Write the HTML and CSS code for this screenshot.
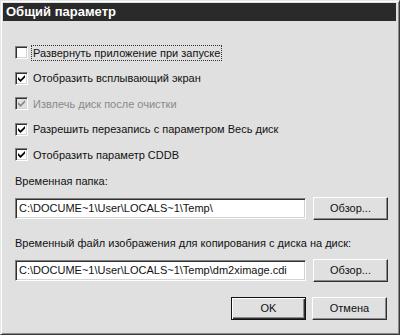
FILE: index.html
```html
<!DOCTYPE html>
<html lang="ru">
<head>
    <meta charset="UTF-8">
    <title>Общий параметр</title>
    <link rel="stylesheet" href="styles.css">
</head>
<body>

<div class="window">
    <div class="titlebar">Общий параметр</div>

    <div class="content">
        <div class="checks">
            <label class="check-row">
                <span class="box"></span>
                <span class="text focused">Развернуть приложение при запуске</span>
            </label>
            <label class="check-row">
                <span class="box">
                    <svg viewBox="0 0 7 7" width="7" height="7"><path d="M0 2 L0 4.5 L2.5 7 L7 2.5 L7 0 L2.5 4.5 Z" fill="#000"/></svg>
                </span>
                <span class="text">Отобразить всплывающий экран</span>
            </label>
            <label class="check-row disabled">
                <span class="box">
                    <svg viewBox="0 0 7 7" width="7" height="7"><path d="M0 2 L0 4.5 L2.5 7 L7 2.5 L7 0 L2.5 4.5 Z" fill="#8a8a8a"/></svg>
                </span>
                <span class="text">Извлечь диск после очистки</span>
            </label>
            <label class="check-row">
                <span class="box">
                    <svg viewBox="0 0 7 7" width="7" height="7"><path d="M0 2 L0 4.5 L2.5 7 L7 2.5 L7 0 L2.5 4.5 Z" fill="#000"/></svg>
                </span>
                <span class="text">Разрешить перезапись с параметром Весь диск</span>
            </label>
            <label class="check-row">
                <span class="box">
                    <svg viewBox="0 0 7 7" width="7" height="7"><path d="M0 2 L0 4.5 L2.5 7 L7 2.5 L7 0 L2.5 4.5 Z" fill="#000"/></svg>
                </span>
                <span class="text">Отобразить параметр CDDB</span>
            </label>
        </div>

        <div class="field first">
            <div class="field-label">Временная папка:</div>
            <div class="field-row">
                <div class="textbox">C:\DOCUME~1\User\LOCALS~1\Temp\</div>
                <button class="btn">Обзор...</button>
            </div>
        </div>

        <div class="field second">
            <div class="field-label">Временный файл изображения для копирования с диска на диск:</div>
            <div class="field-row">
                <div class="textbox">C:\DOCUME~1\User\LOCALS~1\Temp\dm2ximage.cdi</div>
                <button class="btn">Обзор...</button>
            </div>
        </div>

        <div class="actions">
            <button class="btn default">OK</button>
            <button class="btn">Отмена</button>
        </div>
    </div>
</div>

</body>
</html>
```

FILE: styles.css
```css
body {
    margin: 0;
    padding: 0;
    background-color: #e0e0e0;
    font-family: "Liberation Sans", Arial, sans-serif;
    font-size: 11px;
    color: #111;
}

.window {
    width: 400px;
    height: 335px;
    box-sizing: border-box;
    background-color: #e0e0e0;
    border-top: 1px solid #e6e6e6;
    border-left: 1px solid #e6e6e6;
    border-right: 1px solid #3a3a3a;
    border-bottom: 1px solid #3a3a3a;
    box-shadow: inset 1px 1px 0 #fff, inset -1px -1px 0 #8a8a8a;
    padding: 2px 3px 0 2px;
}

.titlebar {
    background-color: #2a2a2a;
    color: #fff;
    font-weight: bold;
    font-size: 13px;
    height: 18px;
    line-height: 18px;
    padding-left: 3px;
}

.content {
    padding: 0 0 0 12px;
}

.checks {
    padding-top: 19px;
}

.check-row {
    display: flex;
    align-items: center;
    height: 25.5px;
}

.box {
    width: 9px;
    height: 9px;
    background-color: #fff;
    border-top: 1px solid #808080;
    border-left: 1px solid #808080;
    border-right: 1px solid #fff;
    border-bottom: 1px solid #fff;
    box-shadow: inset 1px 1px 0 #303030, inset -1px -1px 0 #d4d4d4;
    padding: 1px;
    display: flex;
    align-items: center;
    justify-content: center;
    margin-right: 3px;
}

.disabled .box {
    background-color: #e0e0e0;
}

.disabled .text {
    color: #8a8a8a;
}

.text {
    padding: 1px 1px;
    border: 1px solid transparent;
}

.text.focused {
    border: 1px dotted #333;
}

.field-label {
    height: 15px;
    line-height: 15px;
}

.field.first {
    margin-top: 6px;
}

.field.second {
    margin-top: 16px;
}

.field-row {
    display: flex;
    align-items: center;
    margin-top: 8px;
}

.textbox {
    width: 286px;
    height: 17px;
    line-height: 17px;
    background-color: #fff;
    border-top: 1px solid #808080;
    border-left: 1px solid #808080;
    border-right: 1px solid #fff;
    border-bottom: 1px solid #fff;
    box-shadow: inset 1px 1px 0 #303030, inset -1px -1px 0 #d4d4d4;
    padding: 1px 0 1px 3px;
    margin-right: 7px;
    white-space: nowrap;
    overflow: hidden;
}

.btn {
    width: 75px;
    height: 23px;
    box-sizing: border-box;
    background-color: #e0e0e0;
    font-family: "Liberation Sans", Arial, sans-serif;
    font-size: 11px;
    color: #111;
    border-top: 1px solid #fff;
    border-left: 1px solid #fff;
    border-right: 1px solid #303030;
    border-bottom: 1px solid #303030;
    box-shadow: inset -1px -1px 0 #8a8a8a;
    padding: 0;
}

.btn.default {
    border: 1px solid #111;
    box-shadow: inset 1px 1px 0 #fff, inset -1px -1px 0 #303030, inset -2px -2px 0 #8a8a8a;
}

.actions {
    display: flex;
    justify-content: flex-end;
    gap: 6px;
    margin-top: 15px;
    padding-right: 9px;
}
```
